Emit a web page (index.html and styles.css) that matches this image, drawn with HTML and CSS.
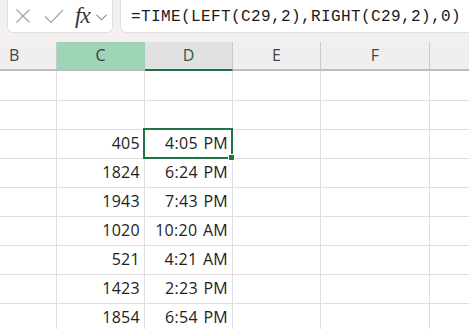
FILE: index.html
```html
<!DOCTYPE html>
<html lang="en">
<head>
    <meta charset="UTF-8">
    <title>Sheet</title>
    <link rel="stylesheet" href="styles.css">
</head>
<body>
    <div class="formula-bar">
        <div class="fx-box">
            <svg class="icon" width="16" height="16" viewBox="0 0 16 16"><path d="M1.5 1.5l13 13M14.5 1.5l-13 13" stroke="#a3a3a3" stroke-width="1.2" fill="none"/></svg>
            <svg class="icon check" width="20" height="16" viewBox="0 0 20 16"><path d="M1 8.5l6 6L19 2" stroke="#a3a3a3" stroke-width="1.2" fill="none"/></svg>
            <span class="fx">fx</span>
            <svg class="icon chev" width="11" height="7" viewBox="0 0 11 7"><path d="M0.5 0.8l5 5 5-5" stroke="#8a8a8a" stroke-width="1.1" fill="none"/></svg>
        </div>
        <div class="input-box">=TIME(LEFT(C29,2),RIGHT(C29,2),0)</div>
    </div>

    <div class="grid">
        <div class="row head">
            <div class="cell col-b">B</div>
            <div class="cell col-c hl">C</div>
            <div class="cell col-d sel">D</div>
            <div class="cell col-e">E</div>
            <div class="cell col-f">F</div>
            <div class="cell col-g"></div>
        </div>
        <div class="row first">
            <div class="cell col-b"></div><div class="cell col-c"></div><div class="cell col-d"></div>
            <div class="cell col-e"></div><div class="cell col-f"></div><div class="cell col-g"></div>
        </div>
        <div class="row">
            <div class="cell col-b"></div><div class="cell col-c"></div><div class="cell col-d"></div>
            <div class="cell col-e"></div><div class="cell col-f"></div><div class="cell col-g"></div>
        </div>
        <div class="row">
            <div class="cell col-b"></div><div class="cell col-c num">405</div><div class="cell col-d num active">4:05 PM</div>
            <div class="cell col-e"></div><div class="cell col-f"></div><div class="cell col-g"></div>
        </div>
        <div class="row">
            <div class="cell col-b"></div><div class="cell col-c num">1824</div><div class="cell col-d num">6:24 PM</div>
            <div class="cell col-e"></div><div class="cell col-f"></div><div class="cell col-g"></div>
        </div>
        <div class="row">
            <div class="cell col-b"></div><div class="cell col-c num">1943</div><div class="cell col-d num">7:43 PM</div>
            <div class="cell col-e"></div><div class="cell col-f"></div><div class="cell col-g"></div>
        </div>
        <div class="row">
            <div class="cell col-b"></div><div class="cell col-c num">1020</div><div class="cell col-d num">10:20 AM</div>
            <div class="cell col-e"></div><div class="cell col-f"></div><div class="cell col-g"></div>
        </div>
        <div class="row">
            <div class="cell col-b"></div><div class="cell col-c num">521</div><div class="cell col-d num">4:21 AM</div>
            <div class="cell col-e"></div><div class="cell col-f"></div><div class="cell col-g"></div>
        </div>
        <div class="row">
            <div class="cell col-b"></div><div class="cell col-c num">1423</div><div class="cell col-d num">2:23 PM</div>
            <div class="cell col-e"></div><div class="cell col-f"></div><div class="cell col-g"></div>
        </div>
        <div class="row">
            <div class="cell col-b"></div><div class="cell col-c num">1854</div><div class="cell col-d num">6:54 PM</div>
            <div class="cell col-e"></div><div class="cell col-f"></div><div class="cell col-g"></div>
        </div>
    </div>
</body>
</html>
```

FILE: styles.css
```css
body {
    margin: 0;
    width: 469px;
    height: 329px;
    overflow: hidden;
    background: #ffffff;
    font-family: 'Open Sans', 'Noto Sans', sans-serif;
    color: #222;
}

.formula-bar {
    display: flex;
    gap: 7px;
    height: 42px;
    padding-left: 7px;
    background: #f3f0ef;
    box-sizing: border-box;
}

.fx-box,
.input-box {
    margin-top: -6px;
    height: 39px;
    box-sizing: border-box;
    background: #fff;
    border: 1px solid #e2dfdf;
    border-radius: 6px;
}

.fx-box {
    width: 106px;
    display: flex;
    align-items: center;
    padding: 5px 0 0 7px;
}

.icon {
    display: block;
}

.check {
    margin-left: 13px;
}

.fx {
    margin-left: 11px;
    font-family: 'Liberation Serif', serif;
    font-style: italic;
    font-size: 23px;
    line-height: 24px;
    color: #333;
    letter-spacing: -1px;
}

.chev {
    margin-left: 6px;
    margin-top: 2px;
}

.input-box {
    flex: 1;
    border-right: none;
    border-radius: 6px 0 0 6px;
    padding: 12px 0 0 10px;
    font-family: 'Liberation Mono', monospace;
    font-size: 16px;
    line-height: 21px;
    letter-spacing: 0.4px;
    color: #1a1a1a;
    white-space: nowrap;
}

.row {
    display: flex;
    height: 29px;
}

.row.first {
    height: 30px;
}

.cell {
    box-sizing: border-box;
    flex: none;
    border-right: 1px solid #dedede;
    border-bottom: 1px solid #dedede;
    font-size: 16px;
    line-height: 27px;
}

.col-b { width: 57px; }
.col-c { width: 88px; }
.col-d { width: 88px; }
.col-e { width: 88px; }
.col-f { width: 109px; }
.col-g { flex: 1; border-right: none; }

.head .cell {
    background: #efefef;
    border-right-color: #c9c9c9;
    border-bottom: 2px solid #bdbdbd;
    text-align: center;
    color: #444;
    font-size: 16px;
    line-height: 27px;
}

.head .col-b {
    text-align: left;
    padding-left: 9px;
}

.head .hl {
    background: #9fd5b7;
    border-right-color: #9fd5b7;
    color: #3b3b3b;
}

.head .sel {
    background: #e1e1e1;
    border-bottom-color: #217346;
    color: #2f5a42;
}

.num {
    text-align: right;
    padding-right: 4px;
    letter-spacing: 0.3px;
    word-spacing: 1px;
}

.active {
    position: relative;
}

.active::after {
    content: "";
    position: absolute;
    top: -2px;
    left: -2px;
    right: -1px;
    bottom: -1px;
    border: 2px solid #217346;
}

.active::before {
    content: "";
    position: absolute;
    right: -3px;
    bottom: -3px;
    width: 5px;
    height: 5px;
    background: #217346;
    border: 1px solid #fff;
    z-index: 1;
}
```
